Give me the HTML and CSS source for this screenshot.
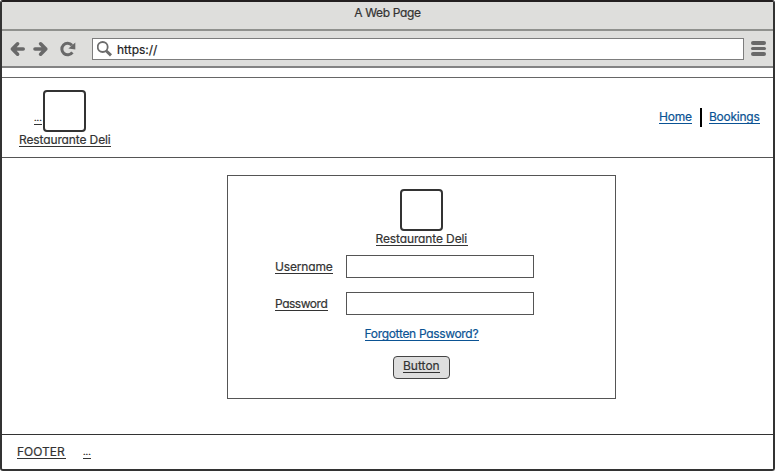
FILE: index.html
```
<!DOCTYPE html>
<html lang="en">
<head>
<meta charset="utf-8">
<title>A Web Page</title>
<link rel="stylesheet" href="styles.css">
</head>
<body>
<div class="window">
  <div class="titlebar"><span class="title">A Web Page</span></div>
  <div class="toolbar">
    <svg class="nav-icons" width="70" height="20" viewBox="0 0 70 20" fill="none" stroke="#696969" stroke-width="3.6" stroke-linecap="round" stroke-linejoin="round">
      <path d="M4.4 10H15.2M9.6 4.8L4.4 10L9.6 15.2"/>
      <path d="M27 10H37.8M32.6 4.8L37.8 10L32.6 15.2"/>
      <path stroke-width="3" stroke-linecap="butt" d="M64.4 13.4A5.8 5.8 0 1 1 64 6.2"/>
      <path fill="#696969" stroke="none" d="M67.3 3.6V10.4L60.4 9.6Z"/>
    </svg>
    <div class="address">
      <svg width="17" height="18" viewBox="0 0 17 18" fill="none" stroke="#6c6c6c"><circle cx="5.7" cy="7" r="5" stroke-width="1.8"/><path d="M9.4 11L14 15.4" stroke-width="3"/></svg>
      <span>https://</span>
    </div>
    <div class="menu"><i></i><i></i><i></i></div>
  </div>
  <div class="spacer"></div>
  <header class="header">
    <div class="brand">
      <div class="brand-top"><span class="label dots">...</span><div class="logo"></div></div>
      <span class="label name">Restaurante Deli</span>
    </div>
    <nav class="nav"><a class="label link home">Home</a><span class="divider"></span><a class="label link bookings">Bookings</a></nav>
  </header>
  <main class="main">
    <form class="panel">
      <div class="logo"></div>
      <span class="label name">Restaurante Deli</span>
      <div class="row first"><span class="label username">Username</span><div class="field"></div></div>
      <div class="row"><span class="label password">Password</span><div class="field"></div></div>
      <a class="label link forgot">Forgotten Password?</a>
      <div class="button"><span class="label button-text">Button</span></div>
    </form>
  </main>
  <footer class="footer"><span class="label foot">FOOTER</span><span class="label dots">...</span></footer>
</div>
</body>
</html>
```
FILE: styles.css
```
* { box-sizing: border-box; }
body { margin: 0; background: #fff; font-family: Inter, "Liberation Sans", sans-serif; font-size: 12px; line-height: 13px; color: #333; font-feature-settings: "cv11"; -webkit-text-stroke: 0.2px currentColor; }
.window { width: 775px; height: 471px; border: 2px solid #333; border-top: 2px solid #231f20; border-radius: 3px; display: flex; flex-direction: column; background: #fff; overflow: hidden; }
.titlebar { height: 27px; background: #dededc; text-align: center; padding-top: 4px; }
.title { letter-spacing: -0.35px; }
.toolbar { height: 39px; background: #dededc; border-top: 2px solid #90918e; border-bottom: 2px solid #838383; display: flex; align-items: flex-start; padding: 7px 7px 0 6px; }
.nav-icons { display: block; margin-top: 1px; }
.address { margin-left: 14px; width: 652px; height: 22px; border: 1px solid #7d7d7d; background: #fff; display: flex; align-items: center; padding-left: 4px; color: #222; }
.address span { margin-left: 3px; }
.menu { display: flex; flex-direction: column; gap: 2px; margin: 3px 0 0 7px; }
.menu i { width: 15px; height: 3.6px; border-radius: 2px; background: #696969; }
.spacer { height: 9px; }
.header { height: 81px; border-top: 1px solid #666; border-bottom: 1px solid #555; display: flex; justify-content: space-between; padding: 12px 13px 0 17px; }
.label { display: block; height: 14px; border-bottom: 1px solid currentColor; white-space: nowrap; }
.name { width: 92px; letter-spacing: -0.12px; }
.brand-top { display: flex; align-items: flex-end; padding-left: 15px; height: 43px; gap: 1px; }
.logo { width: 43px; height: 42px; border: 2px solid #333; border-radius: 4px; flex: none; }
.brand-top .logo { margin-bottom: 1px; }
.brand-top .dots { margin-bottom: 8px; }
.dots { width: 8px; font-size: 9px; }
.nav { display: flex; align-items: flex-start; padding-top: 20px; }
.link { color: #0b5394; }
.home { width: 33px; letter-spacing: -0.2px; }
.bookings { width: 51px; letter-spacing: -0.25px; }
.divider { width: 2px; height: 19px; background: #000; margin: -2px 7px 0 8px; }
.main { flex: 1; display: flex; justify-content: center; align-items: flex-start; padding: 17px 0 0 68px; }
.panel { width: 389px; height: 224px; border: 1px solid #555; display: flex; flex-direction: column; align-items: center; padding-top: 13px; }
.panel .name { margin-top: 1px; }
.row { display: flex; align-items: flex-start; width: 259px; height: 23px; margin: 14px 34px 0 0; justify-content: space-between; }
.row.first { margin-top: 9px; }
.row .label { margin-top: 5px; }
.field { width: 188px; height: 23px; border: 1px solid #555; }
.username { width: 58px; letter-spacing: -0.15px; }
.password { width: 53px; letter-spacing: -0.47px; }
.forgot { width: 114px; margin-top: 12px; letter-spacing: -0.32px; }
.button { margin-top: 15px; width: 57px; height: 23px; border: 1px solid #444; border-radius: 4px; background: #dedede; display: flex; justify-content: center; padding-top: 2px; }
.button-text { width: 37px; }
.footer { height: 35px; border-top: 1px solid #333; display: flex; padding: 10px 0 0 15px; gap: 17px; }
.foot { width: 49px; }
```
